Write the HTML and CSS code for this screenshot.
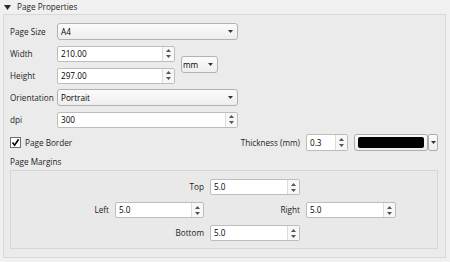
FILE: index.html
```html
<!DOCTYPE html>
<html>
<head>
<meta charset="utf-8">
<link rel="stylesheet" href="styles.css">
</head>
<body>
<div class="header">
  <svg class="caret" width="7" height="5" viewBox="0 0 7 5"><path d="M0 0H7L3.5 5Z" fill="#2b2b2b"/></svg>
  <span>Page Properties</span>
</div>
<div class="group">
  <div class="form">
    <span class="lbl">Page Size</span>
    <div class="combo span2"><span>A4</span><svg class="arr" width="5" height="3" viewBox="0 0 5 3"><path d="M0 0H5L2.5 3Z" fill="#333"/></svg></div>

    <div class="combo unit"><span>mm</span><svg class="arr" width="5" height="3" viewBox="0 0 5 3"><path d="M0 0H5L2.5 3Z" fill="#333"/></svg></div>

    <span class="lbl">Width</span>
    <div class="spin col2"><span class="val">210.00</span><span class="sbtn"><svg width="5" height="9" viewBox="0 0 5 9"><path d="M2.5 0L5 3H0Z M0 6H5L2.5 9Z" fill="#555"/></svg></span></div>

    <span class="lbl">Height</span>
    <div class="spin col2"><span class="val">297.00</span><span class="sbtn"><svg width="5" height="9" viewBox="0 0 5 9"><path d="M2.5 0L5 3H0Z M0 6H5L2.5 9Z" fill="#555"/></svg></span></div>

    <span class="lbl">Orientation</span>
    <div class="combo span2"><span>Portrait</span><svg class="arr" width="5" height="3" viewBox="0 0 5 3"><path d="M0 0H5L2.5 3Z" fill="#333"/></svg></div>

    <span class="lbl">dpi</span>
    <div class="spin span2"><span class="val">300</span><span class="sbtn"><svg width="5" height="9" viewBox="0 0 5 9"><path d="M2.5 0L5 3H0Z M0 6H5L2.5 9Z" fill="#555"/></svg></span></div>
  </div>

  <div class="border-row">
    <div class="check-wrap">
      <span class="checkbox"><svg width="9" height="9" viewBox="0 0 9 9"><path d="M1.5 4.6L3.6 7.2L7.6 1.2" fill="none" stroke="#000" stroke-width="1.6"/></svg></span>
      <span>Page Border</span>
    </div>
    <div class="thick">
      <span>Thickness (mm)</span>
      <div class="spin thin"><span class="val">0.3</span><span class="sbtn"><svg width="5" height="9" viewBox="0 0 5 9"><path d="M2.5 0L5 3H0Z M0 6H5L2.5 9Z" fill="#555"/></svg></span></div>
      <div class="colorbtn">
        <span class="swatch-btn"><span class="swatch"></span></span>
        <span class="dropbtn"><svg width="5" height="3" viewBox="0 0 5 3"><path d="M0 0H5L2.5 3Z" fill="#333"/></svg></span>
      </div>
    </div>
  </div>

  <div class="margins-title">Page Margins</div>
  <div class="margins">
    <span class="mlbl top-l">Top</span>
    <div class="spin top-i"><span class="val">5.0</span><span class="sbtn"><svg width="5" height="9" viewBox="0 0 5 9"><path d="M2.5 0L5 3H0Z M0 6H5L2.5 9Z" fill="#555"/></svg></span></div>

    <span class="mlbl left-l">Left</span>
    <div class="spin left-i"><span class="val">5.0</span><span class="sbtn"><svg width="5" height="9" viewBox="0 0 5 9"><path d="M2.5 0L5 3H0Z M0 6H5L2.5 9Z" fill="#555"/></svg></span></div>

    <span class="mlbl right-l">Right</span>
    <div class="spin right-i"><span class="val">5.0</span><span class="sbtn"><svg width="5" height="9" viewBox="0 0 5 9"><path d="M2.5 0L5 3H0Z M0 6H5L2.5 9Z" fill="#555"/></svg></span></div>

    <span class="mlbl bottom-l">Bottom</span>
    <div class="spin bottom-i"><span class="val">5.0</span><span class="sbtn"><svg width="5" height="9" viewBox="0 0 5 9"><path d="M2.5 0L5 3H0Z M0 6H5L2.5 9Z" fill="#555"/></svg></span></div>
  </div>
</div>
</body>
</html>
```

FILE: styles.css
```css
html, body {
  margin: 0;
  padding: 0;
}
body {
  width: 450px;
  height: 262px;
  overflow: hidden;
  background: #f0f0f0;
  font-family: "Open Sans", "Noto Sans", sans-serif;
  font-size: 8.2px;
  line-height: 12px;
  color: #1e1e1e;
}
.header {
  height: 14px;
  display: flex;
  align-items: center;
  gap: 6px;
  padding-left: 4px;
}
.caret { display: block; }

.group {
  margin-left: 3px;
  width: 443px;
  height: 244px;
  box-sizing: border-box;
  border: 1px solid #d9d9d9;
  background: #ebebeb;
  padding: 8px 7px 0 6px;
}

.form {
  display: grid;
  grid-template-columns: 47px 118px 63px 1fr;
  grid-template-rows: repeat(5, 17px);
  row-gap: 5px;
  align-items: center;
}
.lbl { grid-column: 1; }
.span2 { grid-column: 2 / 4; }
.col2 { grid-column: 2; }
.unit {
  grid-column: 3;
  grid-row: 2 / span 2;
  margin-left: 6px;
  width: 37px;
  padding-left: 1px !important;
}

.combo {
  height: 17px;
  box-sizing: border-box;
  border: 1px solid #b3b3b3;
  border-radius: 3px;
  background: linear-gradient(#fbfbfb, #eeeeee);
  display: flex;
  align-items: center;
  justify-content: space-between;
  padding: 0 4px 0 3px;
  color: #000;
}
.arr { display: block; }

.spin {
  height: 16px;
  box-sizing: border-box;
  border: 1px solid #bdbdbd;
  border-radius: 2px;
  background: #fff;
  display: flex;
  align-items: stretch;
  color: #000;
}
.spin .val {
  flex: 1;
  padding-left: 3px;
  display: flex;
  align-items: center;
}
.sbtn {
  width: 11px;
  border-left: 1px solid #dcdcdc;
  background: #f7f7f7;
  display: flex;
  align-items: center;
  justify-content: center;
  border-radius: 0 2px 2px 0;
}
.sbtn svg { display: block; }

.border-row {
  margin-top: 6px;
  height: 17px;
  display: flex;
  justify-content: space-between;
  align-items: center;
}
.check-wrap {
  display: flex;
  align-items: center;
  gap: 4px;
}
.checkbox {
  width: 11px;
  height: 11px;
  box-sizing: border-box;
  border: 1px solid #6e6e6e;
  background: #fff;
  display: flex;
  align-items: center;
  justify-content: center;
}
.checkbox svg { display: block; }
.thick {
  display: flex;
  align-items: center;
  gap: 6px;
}
.thin {
  width: 42px;
  height: 17px;
}
.colorbtn {
  display: flex;
  height: 17px;
}
.swatch-btn {
  width: 74px;
  box-sizing: border-box;
  border: 1px solid #adadad;
  border-radius: 3px;
  background: linear-gradient(#fbfbfb, #ececec);
  padding: 2px 3px;
  display: flex;
}
.swatch {
  flex: 1;
  background: #000;
  border-radius: 2px;
}
.dropbtn {
  width: 10px;
  box-sizing: border-box;
  border: 1px solid #adadad;
  border-radius: 2px;
  background: linear-gradient(#fbfbfb, #ececec);
  display: flex;
  align-items: center;
  justify-content: center;
}
.dropbtn svg { display: block; }

.margins-title {
  margin-top: 5px;
  height: 12px;
}
.margins {
  margin-top: 2px;
  height: 79px;
  box-sizing: border-box;
  border: 1px solid #d6d6d6;
  background: #e9e9e9;
  padding-top: 8px;
  display: grid;
  grid-template-columns: 98px 89px 90px 90px;
  grid-template-rows: 16px 16px 16px;
  column-gap: 6px;
  row-gap: 7px;
  align-items: center;
}
.mlbl { justify-self: end; }
.top-l { grid-row: 1; grid-column: 2; }
.top-i { grid-row: 1; grid-column: 3; }
.left-l { grid-row: 2; grid-column: 1; }
.left-i { grid-row: 2; grid-column: 2; }
.right-l { grid-row: 2; grid-column: 3; }
.right-i { grid-row: 2; grid-column: 4; }
.bottom-l { grid-row: 3; grid-column: 2; }
.bottom-i { grid-row: 3; grid-column: 3; }
```
